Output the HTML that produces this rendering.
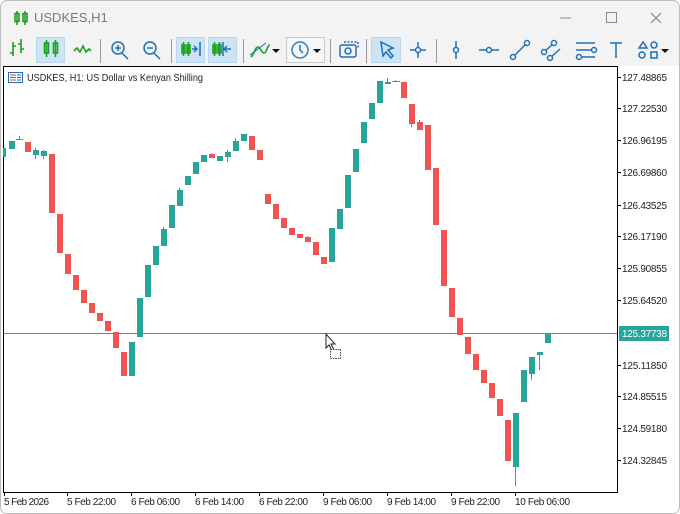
<!DOCTYPE html>
<html><head><meta charset="utf-8">
<style>
*{margin:0;padding:0;box-sizing:border-box}
body{width:680px;height:514px;background:#fff;font-family:"Liberation Sans",sans-serif;overflow:hidden;position:relative}
.win{position:absolute;left:0;top:0;width:680px;height:514px;border:1px solid #bcbcbc;border-radius:7px;background:#f3f3f3;overflow:hidden}
.title{position:absolute;left:0;top:0;width:680px;height:32px;background:#f3f3f3}
.title span{position:absolute;left:33px;top:9px;font-size:13px;color:#7a7a7a}
.tb{position:absolute;left:0;top:32px;width:680px;height:33px;background:#f3f3f3}
.hl{position:absolute;top:4px;height:26px;background:#cce4f7;border:1px solid #b9d6ee}
.sep{position:absolute;top:6px;width:1px;height:24px;background:#9a9a9a}
.main{position:absolute;left:0;top:65px;width:680px;height:449px;background:#fff}
</style></head><body>
<div class="win">
<div class="title">
<svg style="position:absolute;left:12px;top:9px" width="16" height="16"><g stroke="#1a9a1a" fill="none" stroke-width="1.5"><rect x="2" y="3.5" width="4" height="8"/><line x1="4" y1="1" x2="4" y2="15"/><rect x="10" y="3.5" width="4" height="8"/><line x1="12" y1="1" x2="12" y2="15"/></g></svg>
<span>USDKES,H1</span>
<svg style="position:absolute;left:557px;top:10px" width="110" height="14"><line x1="2" y1="7" x2="13" y2="7" stroke="#888" stroke-width="1"/><rect x="48.5" y="1.5" width="10" height="10" fill="none" stroke="#888"/><path d="M93 2 L103 12 M103 2 L93 12" stroke="#888" stroke-width="1.2"/></svg>
</div>
<div class="tb">
<div class="hl" style="left:35px;width:29px"></div>
<div class="hl" style="left:175px;width:29px"></div>
<div class="hl" style="left:207px;width:29px"></div>
<div class="hl" style="left:370px;width:30px"></div>
<div style="position:absolute;left:285px;top:4px;width:39px;height:26px;border:1px solid #c8c8c8;background:#f7f7f7"></div>
<div class="sep" style="left:99px"></div><div class="sep" style="left:170px"></div><div class="sep" style="left:242px"></div><div class="sep" style="left:329px"></div><div class="sep" style="left:365px"></div><div class="sep" style="left:435px"></div>
<svg style="position:absolute;left:0;top:0" width="680" height="33">
<g stroke="#1aa31a" stroke-width="1.6" fill="none">
<path d="M12 9v14M9 20h3M12 13h3M20 6v14M17 11h3M20 16h3"/>
<rect x="43.5" y="10" width="4" height="10"/><line x1="45.5" y1="7" x2="45.5" y2="24"/><rect x="52.5" y="10" width="4" height="10"/><line x1="54.5" y1="7" x2="54.5" y2="24"/>
<path d="M73 18l3-3 3 4 3-6 3 6 3-3 2 2"/>
<rect x="181" y="12" width="3" height="8"/><line x1="182.5" y1="9" x2="182.5" y2="23"/><rect x="186" y="12" width="3" height="8"/><line x1="187.5" y1="9" x2="187.5" y2="23"/>
<rect x="212" y="12" width="3" height="8"/><line x1="213.5" y1="9" x2="213.5" y2="23"/><rect x="217" y="12" width="3" height="8"/><line x1="218.5" y1="9" x2="218.5" y2="23"/>
<path d="M250 24c3-2 4-10 7-10s3 6 6 6 3-8 6-8"/>
</g>
<g stroke="#1e6fb8" stroke-width="1.5" fill="none">
<circle cx="117" cy="15" r="6"/><path d="M121 20l6 6M114 15h6M117 12v6"/>
<circle cx="149" cy="15" r="6"/><path d="M153 20l6 6M146 15h6"/>
<path d="M191 16h5M193 13l3 3-3 3M199 9v14"/>
<path d="M223 16h7M226 13l-3 3 3 3M222 9v14" />
<path d="M249 22l16-12" stroke-width="1"/>
<circle cx="299" cy="17" r="8" stroke="#1e7fcf"/><path d="M299 12v5l3 3"/>
<rect x="339" y="12" width="16" height="12" rx="2"/><circle cx="347" cy="18" r="3"/><path d="M343 9h14v6" stroke-dasharray="2 1.5"/>
<path d="M380 9l12 6-5 2 5 6-2 2-5-6-3 4z" fill="#cce4f7"/>
<path d="M417 9v16M409 17h16"/><circle cx="417" cy="17" r="2.5" fill="#fff"/>
<path d="M455 8v18"/><circle cx="455" cy="17" r="2.5" fill="#fff"/>
<path d="M478 17h20"/><circle cx="488" cy="17" r="2.5" fill="#fff"/>
<path d="M512 24l14-14"/><circle cx="512" cy="24" r="2.5" fill="#fff"/><circle cx="526" cy="10" r="2.5" fill="#fff"/>
<path d="M543 19l10-9M549 25l10-9"/><circle cx="543" cy="19" r="2.5" fill="#fff"/><circle cx="553" cy="10" r="2.5" fill="#fff"/><circle cx="549" cy="25" r="2.5" fill="#fff"/>
<path d="M575 10h19M575 17h16M578 24h16"/><circle cx="593" cy="17" r="2.5" fill="#fff"/><circle cx="578" cy="24" r="2.5" fill="#fff"/>
<path d="M609 10h12M615 10v15"/>
<path d="M638 15l4-6 4 6z"/><circle cx="653" cy="12" r="3"/><circle cx="641" cy="22" r="3"/><rect x="650" y="19" width="6" height="6"/>
</g>
<g fill="#111"><path d="M271 16h8l-4 4z"/><path d="M312 16h8l-4 4z"/><path d="M660 16h8l-4 4z"/></g>
</svg>
</div>
<div class="main"></div>
</div>
<svg style="position:absolute;left:0;top:0" width="680" height="514">
<rect x="3.5" y="66.5" width="614" height="426" fill="none" stroke="#000"/>
<g stroke-width="1"><rect x="8.5" y="72.5" width="14" height="10" fill="#fff" stroke="#1e6fb8"/><path d="M10 75h6M10 77.5h6M10 80h6" stroke="#e53935"/><path d="M17 75h4M17 77.5h4M17 80h4" stroke="#1e6fb8"/></g>
<text x="27" y="81" font-size="10.5" fill="#222" font-family="Liberation Sans" textLength="176" lengthAdjust="spacingAndGlyphs">USDKES, H1:  US Dollar vs Kenyan Shilling</text>
<line x1="4" y1="333.5" x2="617" y2="333.5" stroke="#4a9a94" stroke-width="1"/>
<g fill="#26a69a">
<rect x="3" y="148" width="3" height="9"/><rect x="9" y="141" width="6" height="8"/><rect x="16" y="139" width="7" height="1"/><rect x="19" y="136" width="1" height="3"/>
<rect x="33" y="150" width="6" height="5"/><rect x="35" y="148" width="1" height="11"/>
<rect x="41" y="151" width="6" height="5"/><rect x="43" y="150" width="1" height="9"/>
<rect x="129" y="342" width="6" height="34"/><rect x="137" y="298" width="6" height="39"/>
<rect x="145" y="265" width="6" height="32"/><rect x="153" y="246" width="6" height="19"/>
<rect x="161" y="229" width="6" height="17"/><rect x="163" y="227" width="1" height="3"/>
<rect x="169" y="205" width="6" height="23"/><rect x="177" y="190" width="6" height="16"/><rect x="179" y="188" width="1" height="3"/>
<rect x="185" y="176" width="6" height="9"/><rect x="193" y="162" width="6" height="12"/><rect x="201" y="155" width="6" height="7"/>
<rect x="217" y="156" width="6" height="5"/><rect x="225" y="152" width="6" height="5"/><rect x="227" y="150" width="1" height="12"/>
<rect x="233" y="141" width="6" height="10"/><rect x="235" y="138" width="1" height="4"/><rect x="241" y="134" width="6" height="7"/>
<rect x="329" y="228" width="6" height="34"/><rect x="337" y="209" width="6" height="20"/><rect x="345" y="175" width="6" height="33"/>
<rect x="353" y="149" width="6" height="23"/><rect x="361" y="122" width="6" height="21"/><rect x="369" y="103" width="6" height="16"/>
<rect x="377" y="81" width="6" height="22"/><rect x="385" y="82" width="6" height="2"/><rect x="387" y="78" width="1" height="5"/>
<rect x="513" y="413" width="6" height="54"/><rect x="515" y="467" width="1" height="19"/>
<rect x="521" y="370" width="6" height="32"/><rect x="529" y="357" width="6" height="17"/><rect x="531" y="374" width="1" height="6"/>
<rect x="537" y="352" width="6" height="3"/><rect x="539" y="355" width="1" height="15"/><rect x="545" y="333" width="6" height="10"/>
</g>
<g fill="#ef5350">
<rect x="25" y="142" width="6" height="10"/><rect x="49" y="154" width="6" height="59"/><rect x="57" y="214" width="6" height="39"/>
<rect x="65" y="254" width="6" height="20"/><rect x="73" y="275" width="6" height="15"/><rect x="81" y="290" width="6" height="13"/>
<rect x="89" y="303" width="6" height="10"/><rect x="97" y="313" width="6" height="8"/><rect x="105" y="321" width="6" height="10"/>
<rect x="113" y="332" width="6" height="16"/><rect x="121" y="352" width="6" height="24"/>
<rect x="209" y="154" width="6" height="4"/><rect x="211" y="153" width="1" height="2"/><rect x="249" y="136" width="6" height="14"/><rect x="257" y="150" width="6" height="10"/>
<rect x="265" y="194" width="6" height="10"/><rect x="273" y="204" width="6" height="15"/><rect x="281" y="218" width="6" height="10"/>
<rect x="289" y="228" width="6" height="7"/><rect x="297" y="234" width="6" height="4"/><rect x="305" y="237" width="6" height="5"/><rect x="307" y="236" width="1" height="2"/>
<rect x="313" y="242" width="6" height="13"/><rect x="321" y="257" width="6" height="7"/>
<rect x="392" y="81" width="8" height="1"/><rect x="395" y="80" width="1" height="2"/><rect x="401" y="82" width="6" height="16"/>
<rect x="409" y="104" width="6" height="20"/><rect x="411" y="124" width="1" height="3"/><rect x="417" y="122" width="6" height="8"/><rect x="419" y="120" width="1" height="2"/>
<rect x="425" y="125" width="6" height="45"/><rect x="433" y="168" width="6" height="57"/><rect x="441" y="230" width="6" height="56"/>
<rect x="449" y="288" width="6" height="29"/><rect x="457" y="318" width="6" height="17"/><rect x="465" y="337" width="6" height="17"/>
<rect x="473" y="354" width="6" height="16"/><rect x="481" y="370" width="6" height="13"/><rect x="489" y="383" width="6" height="15"/>
<rect x="497" y="399" width="6" height="17"/><rect x="505" y="420" width="6" height="41"/>
</g>
<path d="M326 334v14l3-3 3 6 2-1-3-6h4z" fill="#fff" stroke="#222" stroke-width="1"/>
<rect x="330.5" y="349.5" width="10" height="9" fill="#fff" stroke="#444" stroke-dasharray="1.5 1"/>
<g stroke="#000"><path d="M617 77.5h4M617 108.5h4M617 140.5h4M617 172.5h4M617 205.5h4M617 236.5h4M617 268.5h4M617 300.5h4M617 365.5h4M617 396.5h4M617 428.5h4M617 460.5h4"/>
<path d="M4.5 492v4M67.5 492v4M131.5 492v4M195.5 492v4M259.5 492v4M323.5 492v4M387.5 492v4M451.5 492v4M515.5 492v4"/></g>
<rect x="619" y="326" width="50" height="15" fill="#26a69a"/>
<g font-size="10" fill="#222" font-family="Liberation Sans" lengthAdjust="spacingAndGlyphs">
<text x="622" y="81" textLength="45">127.48865</text><text x="622" y="112" textLength="45">127.22530</text><text x="622" y="144" textLength="45">126.96195</text><text x="622" y="176" textLength="45">126.69860</text>
<text x="622" y="209" textLength="45">126.43525</text><text x="622" y="240" textLength="45">126.17190</text><text x="622" y="272" textLength="45">125.90855</text><text x="622" y="304" textLength="45">125.64520</text>
<text x="622" y="337" fill="#fff" textLength="45">125.37738</text><text x="622" y="369" textLength="45">125.11850</text><text x="622" y="400" textLength="45">124.85515</text><text x="622" y="432" textLength="45">124.59180</text><text x="622" y="464" textLength="45">124.32845</text>
<text x="4" y="505" textLength="45">5 Feb 2026</text><text x="67" y="505" textLength="49">5 Feb 22:00</text><text x="131" y="505" textLength="49">6 Feb 06:00</text><text x="195" y="505" textLength="49">6 Feb 14:00</text>
<text x="259" y="505" textLength="49">6 Feb 22:00</text><text x="323" y="505" textLength="49">9 Feb 06:00</text><text x="387" y="505" textLength="49">9 Feb 14:00</text><text x="451" y="505" textLength="49">9 Feb 22:00</text><text x="515" y="505" textLength="55">10 Feb 06:00</text>
</g>
</svg>
</body></html>
